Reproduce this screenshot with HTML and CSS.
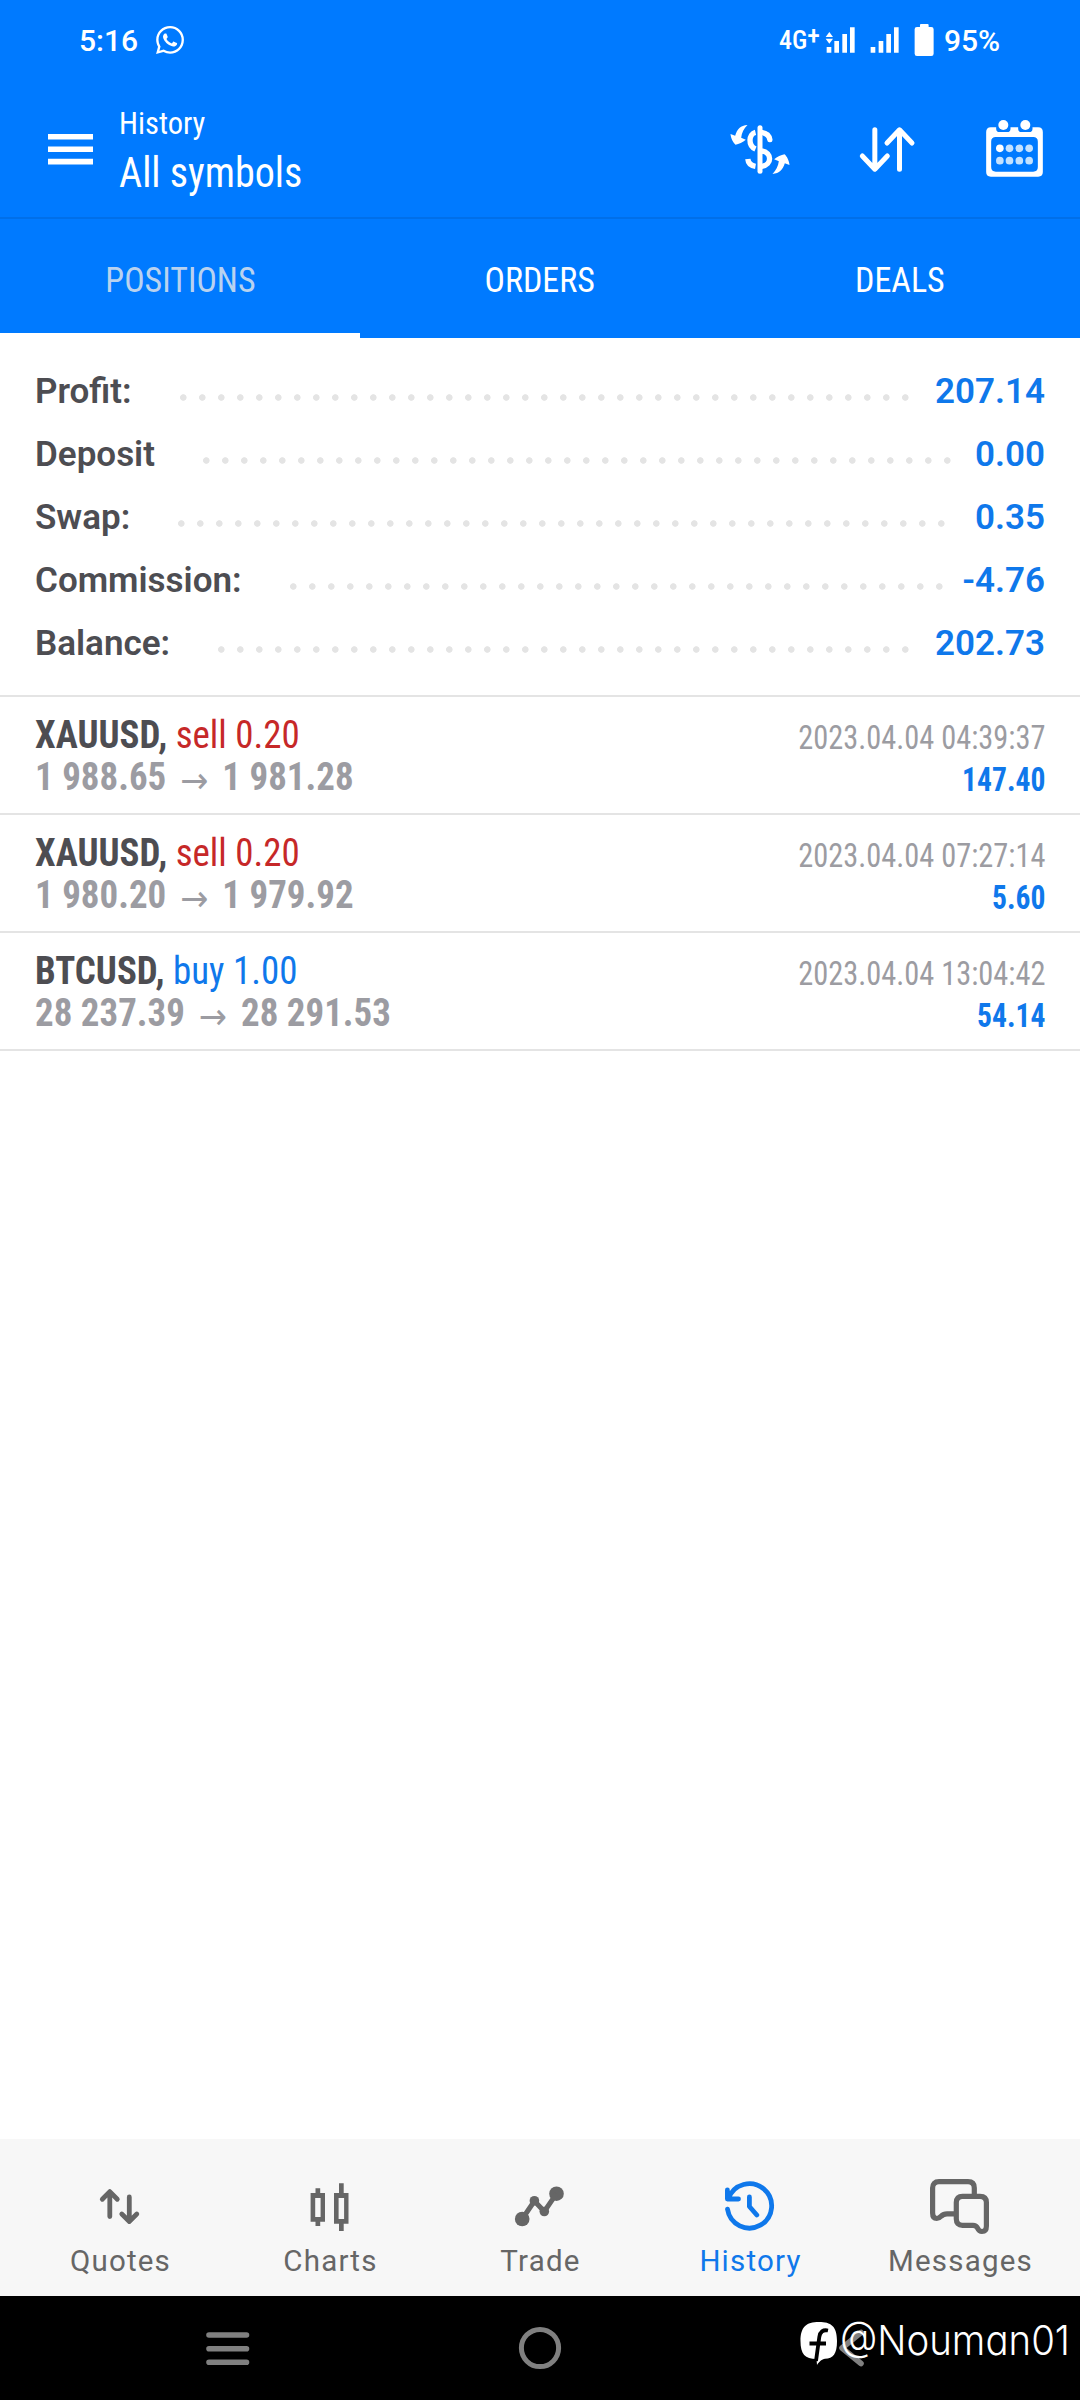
FILE: index.html
```html
<!DOCTYPE html>
<html lang="en">
<head>
<meta charset="utf-8">
<title>History</title>
<link rel="stylesheet" href="styles.css">
</head>
<body>
<div class="screen">
  <header class="top">
    <div class="status">
      <div class="status-left">
        <span class="clock">5:16</span>
        <svg class="whatsapp" viewBox="0 0 24 24"><path fill="#fff" d="M17.472 14.382c-.297-.149-1.758-.867-2.03-.967-.273-.099-.471-.148-.67.15-.197.297-.767.966-.94 1.164-.173.199-.347.223-.644.075-.297-.15-1.255-.463-2.39-1.475-.883-.788-1.48-1.761-1.653-2.059-.173-.297-.018-.458.13-.606.134-.133.298-.347.446-.52.149-.174.198-.298.298-.497.099-.198.05-.371-.025-.52-.075-.149-.669-1.612-.916-2.207-.242-.579-.487-.5-.669-.51-.173-.008-.371-.01-.57-.01-.198 0-.52.074-.792.372-.272.297-1.04 1.016-1.04 2.479 0 1.462 1.065 2.875 1.213 3.074.149.198 2.096 3.2 5.077 4.487.709.306 1.262.489 1.694.625.712.227 1.36.195 1.871.118.571-.085 1.758-.719 2.006-1.413.248-.694.248-1.289.173-1.413-.074-.124-.272-.198-.57-.347m-5.421 7.403h-.004a9.87 9.87 0 01-5.031-1.378l-.361-.214-3.741.982.998-3.648-.235-.374a9.86 9.86 0 01-1.51-5.26c.001-5.45 4.436-9.884 9.888-9.884 2.64 0 5.122 1.03 6.988 2.898a9.825 9.825 0 012.893 6.994c-.003 5.45-4.437 9.884-9.885 9.884m8.413-18.297A11.815 11.815 0 0012.05 0C5.495 0 .16 5.335.157 11.892c0 2.096.547 4.142 1.588 5.945L.057 24l6.305-1.654a11.882 11.882 0 005.683 1.448h.005c6.554 0 11.89-5.335 11.893-11.893a11.821 11.821 0 00-3.48-8.413z"/></svg>
      </div>
      <div class="status-right">
        <span class="net">4G<span class="plus">+</span></span>
        <svg class="signals" viewBox="376 66 334 108">
          <g fill="#fff">
            <path d="M389 96l11 15h-22zM389 131l11-15h-22z"/>
            <path d="M381 141h14v17h-14zM404 123h14v35h-14zM428 102h14v56h-14zM451 82h14v76h-14z"/>
            <path d="M513 141h14v17h-14zM537 123h14v35h-14zM560 102h14v56h-14zM583 82h14v76h-14z"/>
            <path d="M661 75q0-3 3-3h20q3 0 3 3v6h8q7 0 7 7v73q0 7-7 7h-43q-7 0-7-7V88q0-7 7-7h9z"/>
          </g>
        </svg>
        <span class="percent">95%</span>
      </div>
    </div>
    <div class="toolbar">
      <svg class="burger" viewBox="0 0 45 32"><path fill="#fff" d="M0 0h45v5.6H0zM0 12.6h45v5.4H0zM0 24.8h45v5.6H0z"/></svg>
      <div class="titles">
        <div class="title-small">History</div>
        <div class="title-big">All symbols</div>
      </div>
      <div class="actions">
        <svg viewBox="82.5 351 192 192">
          <g fill="none" stroke="#fff" stroke-width="16">
            <path d="M178.500 383V514" stroke-width="15" stroke-linecap="round"/>
            <path d="M165 397C144 402 142 437 165 447"/>
            <path d="M182 397C197 399 206 405 208 419" stroke-linecap="round"/>
            <path d="M184 453C215 457 215 495 184 499"/>
            <path d="M142 477C143 490 153 497 165 499"/>
          </g>
          <path fill="#fff" d="M141 375C120 376 110 388 104 407L90 402C91 415 98 428 105 434C115 431 127 427 136 419L122 413C124 398 130 386 141 375ZM216 522C237 521 247 509 253 490L267 495C266 482 259 469 252 463C242 466 230 470 221 478L235 484C233 499 227 511 216 522Z"/>
        </svg>
        <svg viewBox="466.500 351 192 192">
          <path fill="none" stroke="#fff" stroke-width="15" stroke-linecap="round" stroke-linejoin="round" d="M526 389V507M488.500 468L526 507.500L563.500 468M600 391V508M562.500 429L600 389.500L637.500 429"/>
        </svg>
        <svg viewBox="848.5 351 192 192">
          <path fill="#fff" fill-rule="evenodd" d="M872 382H888V386Q888 396 898 396H921Q931 396 931 386V382H954V386Q954 396 964 396H987Q997 396 997 386V382H1014Q1028 382 1028 396V516Q1028 530 1014 530H872Q858 530 858 516V396Q858 382 872 382ZM887 411Q873 411 873 425V501Q873 515 887 515H999Q1013 515 1013 501V425Q1013 411 999 411Z"/>
          <g fill="#fff"><circle cx="909.500" cy="375" r="15"/><circle cx="975.500" cy="375" r="15"/><circle cx="899" cy="445" r="11.5"/></g>
          <g fill="#c4e2ff"><circle cx="928" cy="445" r="11.5"/><circle cx="957.500" cy="445" r="11.5"/><circle cx="987" cy="445" r="11.5"/><circle cx="899" cy="482" r="11.5"/><circle cx="928" cy="482" r="11.5"/><circle cx="957.500" cy="482" r="11.5"/><circle cx="987" cy="482" r="11.5"/></g>
        </svg>
      </div>
    </div>
    <nav class="tabs">
      <div class="tab current"><span>POSITIONS</span></div>
      <div class="tab"><span>ORDERS</span></div>
      <div class="tab"><span>DEALS</span></div>
    </nav>
  </header>

  <section class="summary">
    <div class="sum-row"><span>Profit:</span><i class="dots"></i><b>207.14</b></div>
    <div class="sum-row"><span>Deposit</span><i class="dots"></i><b>0.00</b></div>
    <div class="sum-row"><span>Swap:</span><i class="dots"></i><b>0.35</b></div>
    <div class="sum-row"><span>Commission:</span><i class="dots"></i><b>-4.76</b></div>
    <div class="sum-row"><span>Balance:</span><i class="dots"></i><b>202.73</b></div>
  </section>

  <main class="positions">
    <article class="position">
      <div class="deal">
        <div class="symbol"><b>XAUUSD,</b> <span class="sell">sell 0.20</span></div>
        <div class="prices">1 988.65<span class="arrow">→</span>1 981.28</div>
      </div>
      <div class="result">
        <div class="time">2023.04.04 04:39:37</div>
        <div class="amount">147.40</div>
      </div>
    </article>
    <article class="position">
      <div class="deal">
        <div class="symbol"><b>XAUUSD,</b> <span class="sell">sell 0.20</span></div>
        <div class="prices">1 980.20<span class="arrow">→</span>1 979.92</div>
      </div>
      <div class="result">
        <div class="time">2023.04.04 07:27:14</div>
        <div class="amount">5.60</div>
      </div>
    </article>
    <article class="position">
      <div class="deal">
        <div class="symbol"><b>BTCUSD,</b> <span class="buy">buy 1.00</span></div>
        <div class="prices">28 237.39<span class="arrow">→</span>28 291.53</div>
      </div>
      <div class="result">
        <div class="time">2023.04.04 13:04:42</div>
        <div class="amount">54.14</div>
      </div>
    </article>
  </main>

  <nav class="bottom">
    <div class="item">
      <svg viewBox="0 0 64 64"><path fill="none" stroke="currentColor" stroke-width="4.8" stroke-linecap="round" stroke-linejoin="round" d="M21.800 18V42.500M14.300 25.200L21.800 17.600L29.300 25.200M41.300 23V47M33.800 40L41.300 47.500L48.800 40"/></svg>
      <span>Quotes</span>
    </div>
    <div class="item">
      <svg viewBox="0 0 64 64"><path fill="currentColor" fill-rule="evenodd" d="M17.500 14.300h4.700V19H27v28.700h-4.800V52h-4.700v-4.300h-4.900V19h4.900zM17.200 24v19h5.400V24zM41 9.300h4.700V19h4.800v30.700h-4.800V57H41v-7.300h-5V19h5zM40.600 24v21h5.500V24z"/></svg>
      <span>Charts</span>
    </div>
    <div class="item">
      <svg viewBox="0 0 64 64"><g fill="currentColor"><circle cx="14.200" cy="45" r="7.300"/><circle cx="26.400" cy="26.700" r="4.800"/><circle cx="36.300" cy="37.500" r="4.800"/><circle cx="48.500" cy="19.700" r="7.300"/></g><path fill="none" stroke="currentColor" stroke-width="5" d="M14.200 45L26.400 27L36.300 37.500L48.500 19.700"/></svg>
      <span>Trade</span>
    </div>
    <div class="item active">
      <svg viewBox="0 0 64 64"><path fill="none" stroke="currentColor" stroke-width="4.800" stroke-linecap="round" stroke-linejoin="round" d="M9.500 35.200A22.200 22.200 0 1 0 10.500 24.500M9.400 16V25H20.500M31.400 23V32.500L38.800 41"/></svg>
      <span>History</span>
    </div>
    <div class="item">
      <svg viewBox="0 0 64 64"><path fill="none" stroke="currentColor" stroke-width="5.200" stroke-linejoin="round" d="M46.300 21V14Q46.300 7.700 40 7.700H11Q4.600 7.700 4.600 14V39Q4.600 44.500 8.800 44.500Q11 44.500 13 42.300Q15.500 39.800 19 39.800H28M34.500 22.300H52Q58.400 22.300 58.400 28.500V52Q58.400 57.500 54 57.500Q51 57.500 49.500 54Q48 51.300 45 51.300H34.500Q28.300 51.300 28.300 45V28.500Q28.300 22.300 34.500 22.300Z"/></svg>
      <span>Messages</span>
    </div>
  </nav>

  <footer class="system">
    <svg viewBox="0 0 64 64"><path stroke="#808080" stroke-width="5.600" stroke-linecap="round" d="M13 19H50.500M13 32.700H50.500M13 46.300H50.500"/></svg>
    <svg viewBox="0 0 64 64"><circle cx="32" cy="32" r="18.600" fill="none" stroke="#808080" stroke-width="5"/></svg>
    <svg viewBox="0 0 64 64"><path fill="none" stroke="#808080" stroke-width="5.600" stroke-linecap="round" stroke-linejoin="round" d="M41 16.500L22 32L41 47.500"/></svg>
    <div class="handle">
      <svg viewBox="0 0 38 46"><path fill="#fff" d="M19 1C31 1 37 5 37 20C37 33 33 37.500 25 37.800C22 38 19 41 17 44L16.500 38C5 38 .5 33 .5 20C.5 6 6 1 19 1Z"/><path fill="none" stroke="#000" stroke-width="3.800" d="M28 9.500Q20.500 8 19.300 16L16 40M9.500 22.500H26"/></svg>
      <span>@Nouman01</span>
    </div>
  </footer>
</div>
</body>
</html>
```
FILE: styles.css
```css
* { box-sizing: border-box; }
body {
  margin: 0;
  background: #fff;
  font-family: "Roboto Condensed", Roboto, sans-serif;
  font-stretch: 75%;
}
svg { display: block; flex: none; }
.screen {
  width: 1080px;
  height: 2400px;
  display: flex;
  flex-direction: column;
  overflow: hidden;
  white-space: nowrap;
}

/* header */
.top { background: #007aff; color: #fff; }
.status {
  height: 82px;
  padding: 0 80px 0 79px;
  display: flex;
  justify-content: space-between;
}
.status-left, .status-right { display: flex; }
.clock, .percent {
  font: 500 30px/82px Roboto, sans-serif;
  font-stretch: 96%;
}
.clock { width: 60px; }
.percent { width: 56px; text-align: right; }
.whatsapp { width: 28px; height: 28px; margin: 26px 0 0 17px; }
.net { width: 46.400px; font-size: 26px; line-height: 80px; font-weight: 500; }
.plus { position: relative; top: -5px; }
.signals { width: 111.300px; height: 36px; margin: 22px 7.300px 0 0; }
.toolbar { height: 135px; display: flex; }
.burger { width: 45px; height: 32px; margin: 52px 0 0 47.500px; }
.titles {
  flex: 1;
  margin-left: 26px;
  transform: scaleX(0.955);
  transform-origin: left;
}
.title-small { font-size: 32px; line-height: 40px; margin-top: 21px; }
.title-big { font-size: 42px; line-height: 50px; margin-top: 5px; }
.actions { display: flex; gap: 63.500px; margin: 35px 33.500px 0 0; }
.actions svg { width: 64px; height: 64px; }
.tabs {
  height: 121px;
  display: flex;
  border-top: 2px solid #006fe9;
}
.tab {
  flex: 1;
  text-align: center;
  font-size: 35.500px;
  line-height: 122px;
}
.tab span { display: inline-block; transform: scaleX(0.957); }
.tab.current { color: #b9d2ef; border-bottom: 5px solid #fff; }

/* totals */
.summary {
  height: 359px;
  padding: 22px 35px 0 35px;
  border-bottom: 2px solid #e4e4e4;
}
.sum-row {
  height: 63px;
  display: flex;
  font: 600 35px/63px Roboto, sans-serif;
  color: #4d4d52;
}
.sum-row b { color: #0f78eb; font-weight: 600; }
.dots {
  flex: 1;
  height: 7px;
  margin: 34px 19px 0 48px;
  background: radial-gradient(circle at 3.300px 3.500px, #e4e4e4 2.900px, transparent 3.600px) 0 0 / 19px 7px repeat-x;
}

/* list */
.position {
  height: 118px;
  padding: 0 35px;
  display: flex;
  justify-content: space-between;
  border-bottom: 2px solid #e4e4e4;
}
.deal {
  padding-top: 17px;
  transform: scaleX(0.935);
  transform-origin: left;
}
.result { padding-top: 20px; text-align: right; }
.symbol, .prices { font-size: 39.500px; line-height: 42px; color: #4d4d52; }
.prices { font-weight: 700; color: #9c9ca2; }
.sell { color: #c62828; }
.buy { color: #0f78eb; }
.arrow {
  position: relative;
  top: 3px;
  display: inline-block;
  width: 60px;
  text-align: center;
  font: 400 36px/30px "DejaVu Sans", sans-serif;
}
.time, .amount {
  font-size: 32.500px;
  line-height: 42px;
  color: #9c9ca2;
  transform: scaleX(0.935);
  transform-origin: right;
}
.amount { font-weight: 700; color: #0f78eb; transform: scaleX(0.91); }

/* bottom navigation */
.bottom {
  margin-top: auto;
  height: 157px;
  padding: 0 15px;
  display: flex;
  background: #f7f7f7;
  color: #666;
}
.item {
  flex: 1;
  display: flex;
  flex-direction: column;
  align-items: center;
  padding-top: 35px;
  font: 400 29.500px/40px Roboto, sans-serif;
  font-stretch: 94%;
  letter-spacing: 1.200px;
}
.item svg { width: 64px; height: 64px; }
.item span { margin: 3px -1px 0 0; }
.item.active { color: #0f78eb; }

.system {
  position: relative;
  height: 104px;
  padding: 20px 196px 0;
  display: flex;
  justify-content: space-between;
  background: #000;
}
.system > svg { width: 64px; height: 64px; }
.handle {
  position: absolute;
  left: 800px;
  top: 25px;
  display: flex;
  color: #fff;
  font: 300 41px/38px Inter, sans-serif;
  font-feature-settings: "cv11";
}
.handle svg { width: 38px; height: 46px; margin-right: 2px; }
.handle span { transform: scaleX(0.937); transform-origin: left; }
```
